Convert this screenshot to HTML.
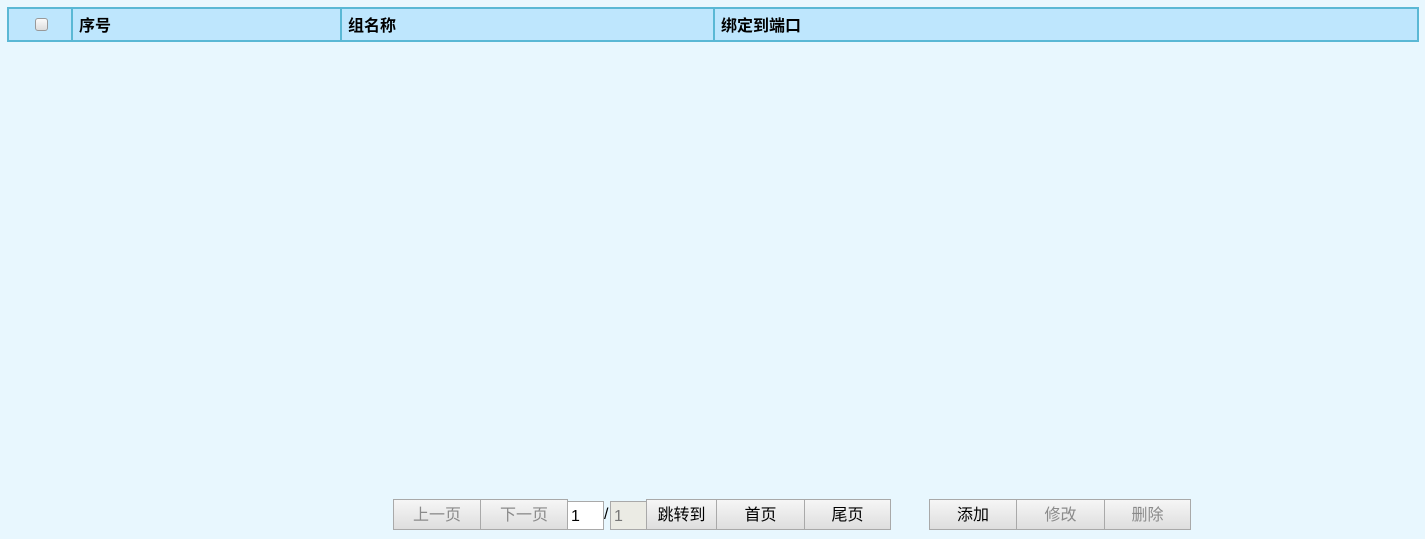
<!DOCTYPE html>
<html><head><meta charset="utf-8"><style>
body{margin:0;width:1425px;height:539px;background:#e8f7fe;font-family:"Liberation Sans","Noto Sans CJK SC",sans-serif;position:relative;overflow:hidden}
.t{position:absolute;left:7px;top:7px;width:1408px;height:31px;border:2px solid #5ab8d5;background:#bee6fd;}
.c{position:absolute;top:0;height:31px;border-left:2px solid #5ab8d5;font-weight:bold;font-size:16px;line-height:36px;padding-left:6px;box-sizing:border-box;color:#000}
.cb{position:absolute;left:26px;top:9px;width:11px;height:11px;border:1px solid #999;border-radius:3px;background:linear-gradient(#fafafa,#ddd)}
.b{position:absolute;top:499px;height:31px;box-sizing:border-box;border:1px solid #a9a9a9;background:linear-gradient(#f6f6f6,#dedede);font-size:16px;text-align:center;line-height:32px;color:#000}
.d{color:#8a8a8a}
.i{position:absolute;top:501px;height:29px;box-sizing:border-box;border:1px solid #a9a9a9;font-size:16px;line-height:29px;padding-left:3px}
</style></head><body>
<div class="t">
<div class="cb"></div>
<div class="c" style="left:62px;width:270px">序号</div>
<div class="c" style="left:331px;width:374px">组名称</div>
<div class="c" style="left:704px;width:704px">绑定到端口</div>
</div>
<div class="b d" style="left:393px;width:88px">上一页</div>
<div class="b d" style="left:480px;width:88px">下一页</div>
<div class="i" style="left:567px;width:37px;background:#fff">1</div>
<div style="position:absolute;left:604px;top:506px;font-size:16px">/</div>
<div class="i d" style="left:610px;width:37px;background:#ebebe4;color:#777">1</div>
<div class="b" style="left:646px;width:71px">跳转到</div>
<div class="b" style="left:716px;width:89px">首页</div>
<div class="b" style="left:804px;width:87px">尾页</div>
<div class="b" style="left:929px;width:88px">添加</div>
<div class="b d" style="left:1016px;width:89px">修改</div>
<div class="b d" style="left:1104px;width:87px">删除</div>
</body></html>
